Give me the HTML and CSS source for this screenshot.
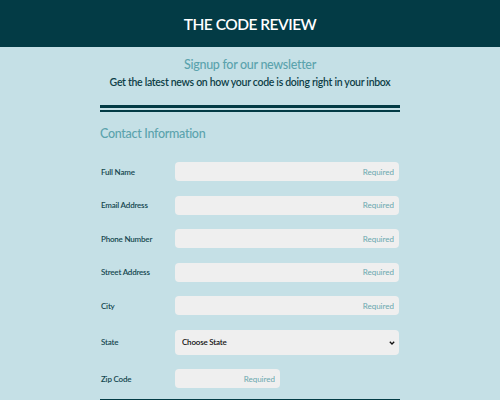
FILE: index.html
```html
<!DOCTYPE html>
<html lang="en">
<head>
<meta charset="utf-8">
<title>The Code Review</title>
<link rel="stylesheet" href="styles.css">
</head>
<body>
<header class="top">
  <h1 class="brand">THE CODE REVIEW</h1>
</header>
<main class="wrap">
  <section class="intro">
    <h2 class="intro-title">Signup for our newsletter</h2>
    <p class="intro-sub">Get the latest news on how your code is doing right in your inbox</p>
  </section>
  <hr class="double">
  <form class="form">
    <h3 class="section-title">Contact Information</h3>
    <div class="rows">
      <div class="row"><label class="label" for="n">Full Name</label><input class="field" id="n" type="text" placeholder="Required"></div>
      <div class="row"><label class="label" for="e">Email Address</label><input class="field" id="e" type="text" placeholder="Required"></div>
      <div class="row"><label class="label" for="p">Phone Number</label><input class="field" id="p" type="text" placeholder="Required"></div>
      <div class="row"><label class="label" for="s">Street Address</label><input class="field" id="s" type="text" placeholder="Required"></div>
      <div class="row"><label class="label" for="c">City</label><input class="field" id="c" type="text" placeholder="Required"></div>
      <div class="row"><label class="label" for="st">State</label>
        <div class="select-wrap">
          <select class="field select" id="st"><option>Choose State</option></select>
          <svg class="chev" width="6" height="4" viewBox="0 0 6 4"><path d="M0.8 0.8 L3 3 L5.2 0.8" fill="none" stroke="#111" stroke-width="1.3"/></svg>
        </div>
      </div>
      <div class="row"><label class="label" for="z">Zip Code</label><input class="field zip" id="z" type="text" placeholder="Required"></div>
    </div>
    <div class="divider"></div>
  </form>
</main>
</body>
</html>
```
FILE: styles.css
```css
* { box-sizing: border-box; }
body {
  margin: 0;
  background: #c5e0e6;
  font-family: "Lato", "Open Sans", sans-serif;
  color: #0f3f47;
}
.top {
  background: #033b45;
  height: 47px;
  display: flex;
  align-items: center;
  justify-content: center;
}
.brand {
  margin: 0;
  color: #ffffff;
  font-size: 15.5px;
  font-weight: 600;
  letter-spacing: -0.5px;
}
.wrap {
  width: 300px;
  margin: 0 auto;
}
.intro {
  text-align: center;
  padding-top: 9px;
}
.intro-title {
  margin: 0;
  font-size: 12.5px;
  font-weight: 500;
  color: #5ba3ad;
  line-height: 18px;
  letter-spacing: -0.3px;
}
.intro-sub {
  margin: 0 -30px;
  font-size: 10.5px;
  font-weight: 600;
  color: #0d3e46;
  line-height: 16px;
  letter-spacing: -0.3px;
}
.double {
  margin: 15px 0 0;
  height: 7px;
  border: 0;
  border-top: 3px solid #033b45;
  border-bottom: 2px solid #033b45;
}
.form { display: block; }
.section-title {
  margin: 13px 0 0;
  font-size: 12.5px;
  font-weight: 500;
  color: #5ba3ad;
  line-height: 18px;
  letter-spacing: -0.3px;
}
.rows {
  display: flex;
  flex-direction: column;
  gap: 14.5px;
  margin-top: 19px;
}
.row {
  display: flex;
  align-items: center;
}
.label {
  width: 75px;
  flex: none;
  font-size: 8px;
  font-weight: 600;
  color: #14474f;
  padding-left: 1px;
  letter-spacing: -0.2px;
}
.field {
  width: 224px;
  height: 19px;
  border: 0;
  border-radius: 4px;
  background: #efefef;
  font-family: inherit;
  font-size: 8px;
  text-align: right;
  padding: 0 5px;
  outline: none;
}
.field::placeholder { color: #6aa7ae; }
.select-wrap {
  position: relative;
  width: 224px;
}
.select {
  display: block;
  height: 25px;
  text-align: left;
  color: #111;
  font-weight: 600;
  padding: 0 7px;
  letter-spacing: -0.2px;
  appearance: none;
  -webkit-appearance: none;
}
.chev {
  position: absolute;
  right: 4px;
  top: 11px;
}
.zip { width: 105px; }
.divider {
  margin-top: 11px;
  height: 2px;
  background: #033b45;
}
```
